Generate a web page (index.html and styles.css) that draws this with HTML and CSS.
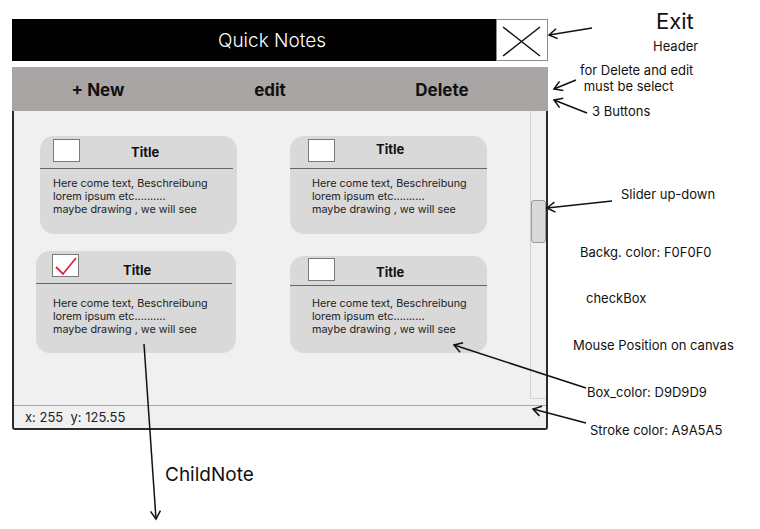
FILE: index.html
```html
<!DOCTYPE html>
<html lang="en">
  <head>
    <meta charset="UTF-8" />
    <meta name="viewport" content="width=device-width, initial-scale=1.0" />
    <title>Quick Notes - Wireframe</title>
    <link rel="stylesheet" href="styles.css">
  </head>
  <body>
    <div class="canvas">
      <div class="app">
        <header class="header">
          <div class="header-title">Quick Notes</div>
          <button class="exit" aria-label="Exit">
            <svg width="50" height="40" viewBox="0 0 50 40">
              <line x1="6" y1="7" x2="43" y2="36" stroke="#111" stroke-width="1.5" />
              <line x1="6" y1="36" x2="43" y2="7" stroke="#111" stroke-width="1.5" />
            </svg>
          </button>
        </header>

        <nav class="toolbar">
          <button class="tool">+ New</button>
          <button class="tool">edit</button>
          <button class="tool">Delete</button>
        </nav>

        <div class="panel">
          <div class="content">
            <div class="notes">
              <div class="note note-one">
                <div class="note-head">
                  <span class="check"></span>
                  <span class="note-title">Title</span>
                </div>
                <p class="note-text">Here come text, Beschreibung<br />lorem ipsum etc..........<br />maybe drawing , we will see</p>
              </div>

              <div class="note note-right">
                <div class="note-head">
                  <span class="check"></span>
                  <span class="note-title">Title</span>
                </div>
                <p class="note-text">Here come text, Beschreibung<br />lorem ipsum etc..........<br />maybe drawing , we will see</p>
              </div>

              <div class="note note-checked">
                <div class="note-head">
                  <span class="check">
                    <svg width="25" height="21" viewBox="0 0 25 21">
                      <polyline points="3,12 10,19 23,3" fill="none" stroke="#d42a3c" stroke-width="1.8" />
                    </svg>
                  </span>
                  <span class="note-title">Title</span>
                </div>
                <p class="note-text">Here come text, Beschreibung<br />lorem ipsum etc..........<br />maybe drawing , we will see</p>
              </div>

              <div class="note note-right note-low">
                <div class="note-head">
                  <span class="check"></span>
                  <span class="note-title">Title</span>
                </div>
                <p class="note-text">Here come text, Beschreibung<br />lorem ipsum etc..........<br />maybe drawing , we will see</p>
              </div>
            </div>

            <div class="scroll-track">
              <div class="scroll-thumb"></div>
            </div>
          </div>

          <div class="status">x: 255&nbsp;&nbsp;y: 125.55</div>
        </div>
      </div>

      <!-- annotations -->
      <span class="note-label label-exit">Exit</span>
      <span class="note-label label-header">Header</span>
      <span class="note-label label-select">for Delete and edit<br />&nbsp;must be select</span>
      <span class="note-label label-buttons">3 Buttons</span>
      <span class="note-label label-slider">Slider up-down</span>
      <span class="note-label label-bg">Backg. color: F0F0F0</span>
      <span class="note-label label-check">checkBox</span>
      <span class="note-label label-mouse">Mouse Position on canvas</span>
      <span class="note-label label-box">Box_color: D9D9D9</span>
      <span class="note-label label-stroke">Stroke color: A9A5A5</span>
      <span class="note-label label-child">ChildNote</span>

      <svg class="arrows" width="760" height="529" viewBox="0 0 760 529">
        <defs>
          <marker id="head" viewBox="-2 -7 12 14" markerWidth="12" markerHeight="14" refX="0" refY="0" orient="auto" markerUnits="userSpaceOnUse">
            <path d="M8,-5 L0,0 L8,5" fill="none" stroke="#111" stroke-width="1.5" />
          </marker>
        </defs>
        <g stroke="#111" stroke-width="1.5" fill="none">
          <line x1="549" y1="35" x2="592" y2="28" marker-start="url(#head)" />
          <line x1="554" y1="89" x2="576" y2="80" marker-start="url(#head)" />
          <line x1="554" y1="100" x2="587" y2="113" marker-start="url(#head)" />
          <line x1="547" y1="208" x2="612" y2="201" marker-start="url(#head)" />
          <line x1="454" y1="345" x2="586" y2="388" marker-start="url(#head)" />
          <line x1="533" y1="409" x2="586" y2="423" marker-start="url(#head)" />
          <line x1="156" y1="519" x2="144" y2="344" marker-start="url(#head)" />
        </g>
      </svg>
    </div>
  </body>
</html>
```

FILE: styles.css
```css
html {
  font-family: Inter, "Noto Sans", sans-serif;
}

body {
  margin: 0;
  background-color: #fff;
  color: #111;
}

.canvas {
  position: relative;
  width: 760px;
  height: 529px;
  overflow: hidden;
}

.app {
  width: 536px;
  margin: 19px 0 0 12px;
}

/* header */

.header {
  display: flex;
  height: 42px;
}

.header-title {
  flex: 1;
  background-color: #000;
  color: #fff;
  font-size: 19px;
  font-weight: 300;
  display: flex;
  align-items: center;
  justify-content: center;
  padding-left: 36px;
}

.exit {
  width: 52px;
  height: 42px;
  padding: 0;
  border: 1px solid #8c8c8c;
  background-color: #fff;
  box-sizing: border-box;
}

.exit svg {
  display: block;
}

/* toolbar */

.toolbar {
  display: grid;
  grid-template-columns: repeat(3, 1fr);
  height: 44px;
  margin-top: 6px;
  padding-right: 20px;
  background-color: #a9a5a5;
}

.tool {
  font-family: inherit;
  font-size: 17px;
  font-weight: 700;
  color: #111;
  background: none;
  border: none;
  padding: 2px 0 0;
}

/* panel */

.panel {
  height: 319px;
  background-color: #f0f0f0;
  border: 2px solid #2b2b2b;
  border-top: none;
  border-radius: 0 0 3px 3px;
  box-sizing: border-box;
  display: flex;
  flex-direction: column;
}

.content {
  flex: 1;
  display: flex;
}

.notes {
  flex: 1;
  display: grid;
  grid-template-columns: 197px 197px;
  grid-template-rows: 98px auto;
  column-gap: 53px;
  row-gap: 17px;
  padding: 25px 0 0 26px;
  align-items: start;
}

.scroll-track {
  width: 16px;
  height: 288px;
  border-left: 1px solid #d2d2d2;
  border-bottom: 1px solid #d2d2d2;
  box-sizing: border-box;
  padding-top: 89px;
}

.scroll-thumb {
  height: 43px;
  background-color: #d9d9d9;
  border: 1px solid #999;
  border-radius: 3px;
  box-sizing: border-box;
}

.status {
  height: 23px;
  border-top: 1px solid #a9a5a5;
  font-size: 13px;
  color: #222;
  padding: 3px 0 0 11px;
  box-sizing: border-box;
}

/* notes */

.note {
  height: 98px;
  background-color: #d9d9d9;
  border-radius: 14px;
  box-sizing: border-box;
}

.note-head {
  display: flex;
  align-items: center;
  height: 32px;
  margin-right: 4px;
  padding-left: 13px;
  border-bottom: 1px solid #666;
}

.check {
  width: 27px;
  height: 23px;
  margin-top: -4px;
  background-color: #fff;
  border: 1px solid #7a7a7a;
  box-sizing: border-box;
}

.check svg {
  display: block;
}

.note-title {
  margin-left: 51px;
  font-size: 13px;
  font-weight: 700;
}

.note-text {
  margin: 0;
  padding: 8px 0 0 13px;
  font-size: 10.8px;
  line-height: 13px;
  color: #222;
}

.note-right .note-head {
  padding-left: 18px;
  margin-right: 0;
}

.note-right .note-title {
  margin-left: 41px;
  margin-top: -6px;
}

.note-right .note-text {
  padding-left: 22px;
}

.note-checked {
  width: 200px;
  height: 102px;
  margin-left: -4px;
}

.note-checked .note-head {
  padding-left: 16px;
}

.note-checked .note-title {
  margin-left: 44px;
  margin-top: 6px;
}

.note-checked .note-text {
  padding-left: 17px;
  padding-top: 13px;
}

.note-low {
  height: 97px;
  margin-top: 5px;
}

.note-low .note-head {
  height: 29px;
}

.note-low .check {
  margin-top: -2px;
}

.note-low .note-title {
  margin-top: 2px;
}

.note-low .note-text {
  padding-top: 11px;
}

/* annotations */

.note-label {
  position: absolute;
  font-size: 13px;
  line-height: 15px;
  color: #111;
  white-space: nowrap;
}

.label-exit {
  left: 656px;
  top: 8px;
  font-size: 22px;
  line-height: 26px;
}

.label-header { left: 653px; top: 39px; }
.label-select { left: 580px; top: 62px; line-height: 16px; }
.label-buttons { left: 592px; top: 104px; }
.label-slider { left: 621px; top: 187px; }
.label-bg { left: 580px; top: 245px; }
.label-check { left: 586px; top: 291px; }
.label-mouse { left: 573px; top: 338px; }
.label-box { left: 587px; top: 385px; }
.label-stroke { left: 590px; top: 423px; }

.label-child {
  left: 165px;
  top: 463px;
  font-size: 19px;
  line-height: 23px;
}

.arrows {
  position: absolute;
  left: 0;
  top: 0;
  pointer-events: none;
}
```
